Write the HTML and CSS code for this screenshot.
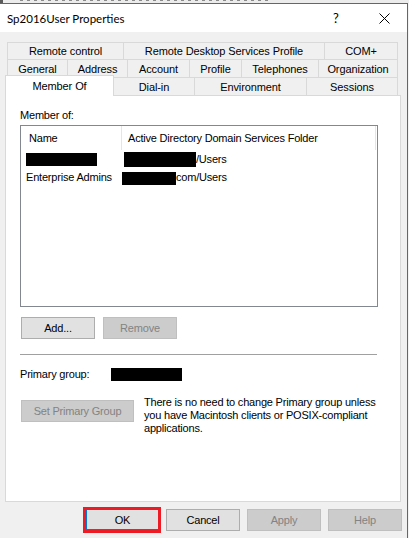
FILE: index.html
```html
<!DOCTYPE html>
<html>
<head>
<meta charset="utf-8">
<title>Sp2016User Properties</title>
<link rel="stylesheet" href="styles.css">
</head>
<body>
<div class="screen">
  <div class="strip"></div>
  <div class="window">
    <div class="titlebar">
      <span class="title">Sp2016User Properties</span>
      <span class="help">?</span>
      <span class="close"><svg width="11" height="11" viewBox="0 0 11 11"><path d="M0.5 0.5 L10.5 10.5 M10.5 0.5 L0.5 10.5" stroke="#000" stroke-width="1" fill="none"/></svg></span>
    </div>
    <div class="body">
      <div class="tabs">
        <div class="tabrow r1">
          <div class="tab t-rc">Remote control</div>
          <div class="tab t-rds">Remote Desktop Services Profile</div>
          <div class="tab t-com">COM+</div>
        </div>
        <div class="tabrow r2">
          <div class="tab t-gen">General</div>
          <div class="tab t-addr">Address</div>
          <div class="tab t-acc">Account</div>
          <div class="tab t-prof">Profile</div>
          <div class="tab t-tel">Telephones</div>
          <div class="tab t-org">Organization</div>
        </div>
        <div class="tabrow r3">
          <div class="tab t-mem selected">Member Of</div>
          <div class="tab t-dial">Dial-in</div>
          <div class="tab t-env">Environment</div>
          <div class="tab t-sess">Sessions</div>
        </div>
      </div>
      <div class="panel">
        <div class="label">Member of:</div>
        <div class="list">
          <div class="lhead">
            <div class="c1 hcell">Name</div>
            <div class="c2 hcell">Active Directory Domain Services Folder</div>
          </div>
          <div class="lrow">
            <div class="c1"><span class="redact rb1"></span></div>
            <div class="c2"><span class="redact rb2"></span>/Users</div>
          </div>
          <div class="lrow">
            <div class="c1">Enterprise Admins</div>
            <div class="c2"><span class="redact rb3"></span>com/Users</div>
          </div>
        </div>
        <div class="btnrow">
          <div class="btn w74">Add...</div>
          <div class="btn w74 disabled">Remove</div>
        </div>
        <div class="sep"></div>
        <div class="primary">
          <span class="plabel">Primary group:</span>
          <span class="redact rb4"></span>
        </div>
        <div class="setrow">
          <div class="btn wset disabled">Set Primary Group</div>
          <div class="note">There is no need to change Primary group unless<br>you have Macintosh clients or POSIX-compliant<br>applications.</div>
        </div>
      </div>
      <div class="footer">
        <div class="btn w74 default">OK</div>
        <div class="btn w74">Cancel</div>
        <div class="btn w74 disabled">Apply</div>
        <div class="btn w74 disabled">Help</div>
      </div>
    </div>
  </div>
</div>
</body>
</html>
```
FILE: styles.css
```css
html, body {
  margin: 0;
  padding: 0;
}
body {
  font-family: "Liberation Sans", Arial, sans-serif;
  font-size: 11px;
  color: #000;
  background: #f3f3f3;
}
.screen {
  width: 409px;
  height: 538px;
  overflow: hidden;
  background: #f3f3f3;
}
.strip {
  height: 3px;
  background:
    repeating-linear-gradient(90deg, #8a8a8a 0 3px, transparent 3px 7px) 20px 0 / 250px 1px no-repeat,
    linear-gradient(#5a5a5a, #5a5a5a) 0 0 / 3px 3px no-repeat,
    #ececec;
}
.window {
  box-sizing: border-box;
  width: 408px;
  height: 535px;
  border-top: 1px solid #1979ca;
  border-right: 1px solid #1979ca;
  background: #f0f0f0;
  display: flex;
  flex-direction: column;
}
.titlebar {
  height: 28px;
  background: #fff;
  display: flex;
  align-items: center;
  flex: none;
}
.title {
  font-family: "Lato", "Liberation Sans", sans-serif;
  font-size: 11.5px;
  padding-left: 7px;
  flex: 1;
}
.help {
  font-family: "Lato", "Liberation Sans", sans-serif;
  font-size: 13px;
  width: 10px;
  margin-right: 36px;
  line-height: 14px;
}
.close {
  width: 11px;
  height: 11px;
  margin-right: 17px;
  display: flex;
}
.body {
  flex: 1;
  background: #f0f0f0;
  display: flex;
  flex-direction: column;
}
.tabs {
  margin-top: 10px;
  margin-left: 7px;
  display: flex;
  flex-direction: column;
}
.tabrow {
  display: flex;
  align-items: flex-start;
}
.r1 { height: 17px; }
.r2 { height: 18px; }
.r3 { height: 18px; }
.tab {
  box-sizing: border-box;
  border: 1px solid #d9d9d9;
  border-bottom: none;
  background: #f0f0f0;
  display: flex;
  align-items: center;
  justify-content: center;
  white-space: nowrap;
  margin-left: -1px;
  letter-spacing: -0.1px;
}
.tab:first-child { margin-left: 0; }
.r1 .tab { height: 17px; }
.r2 .tab { height: 18px; }
.r3 .tab { height: 18px; }
.t-rc { width: 117px; }
.t-rds { width: 202px; }
.t-com { width: 74px; }
.t-gen { width: 61px; }
.t-addr { width: 61px; }
.t-acc { width: 63px; }
.t-prof { width: 53px; }
.t-tel { width: 78px; }
.t-org { width: 80px; }
.t-dial { width: 82px; }
.t-env { width: 113px; }
.t-sess { width: 92px; }
.r3 .tab.selected {
  width: 109px;
  height: 21px;
  margin-left: -2px;
  margin-top: -2px;
  background: #fff;
  position: relative;
  z-index: 1;
}
.panel {
  box-sizing: border-box;
  width: 396px;
  height: 407px;
  margin-left: 5px;
  border: 1px solid #d9d9d9;
  background: #fff;
  padding: 13px 0 0 14px;
  display: flex;
  flex-direction: column;
  flex: none;
}
.label, .plabel, .note {
  line-height: 13px;
  letter-spacing: -0.2px;
}
.list {
  box-sizing: border-box;
  width: 358px;
  height: 182px;
  margin-top: 3px;
  border: 1px solid #828790;
  display: flex;
  flex-direction: column;
}
.lhead {
  display: flex;
  height: 24px;
}
.hcell {
  box-sizing: border-box;
  height: 24px;
  border-right: 1px solid #e5e5e5;
  display: flex;
  align-items: center;
  letter-spacing: -0.2px;
}
.lhead .c1 { width: 101px; padding-left: 8px; }
.lhead .c2 { width: 254px; padding-left: 6px; }
.lrow {
  display: flex;
  height: 18px;
  align-items: center;
  letter-spacing: -0.2px;
}
.lrow .c1 { box-sizing: border-box; width: 101px; padding-left: 5px; display: flex; align-items: center; }
.lrow .c2 { box-sizing: border-box; padding-left: 2px; display: flex; align-items: center; }
.redact {
  display: inline-block;
  background: #000;
}
.rb1 { width: 71px; height: 13px; }
.rb2 { width: 72px; height: 15px; }
.rb3 { width: 54px; height: 13px; margin-left: -2px; margin-top: 3px; }
.rb4 { width: 71px; height: 13px; }
.btn {
  box-sizing: border-box;
  height: 22px;
  border: 1px solid #adadad;
  background: #e1e1e1;
  display: flex;
  align-items: center;
  justify-content: center;
  letter-spacing: -0.2px;
  flex: none;
}
.btn.disabled {
  background: #cccccc;
  border-color: #bfbfbf;
  color: #838383;
}
.btn.default {
  border: 2px solid #0078d7;
  border-top-width: 1px;
  border-right-width: 1px;
  outline: 3px solid #ed1c24;
  outline-offset: -1px;
}
.w74 { width: 74px; }
.wset { width: 113px; }
.btnrow {
  display: flex;
  gap: 8px;
  margin-top: 10px;
  margin-left: 1px;
}
.sep {
  width: 357px;
  height: 1px;
  background: #a0a0a0;
  margin-top: 15px;
}
.primary {
  display: flex;
  align-items: center;
  height: 13px;
  margin-top: 13px;
}
.plabel { width: 91px; }
.setrow {
  display: flex;
  align-items: flex-start;
  margin-top: 15px;
  margin-left: 1px;
}
.setrow .btn { margin-top: 4px; }
.note {
  margin-left: 10px;
}
.footer {
  display: flex;
  justify-content: flex-end;
  gap: 7px;
  margin-top: 7px;
  padding-right: 5px;
}
```
